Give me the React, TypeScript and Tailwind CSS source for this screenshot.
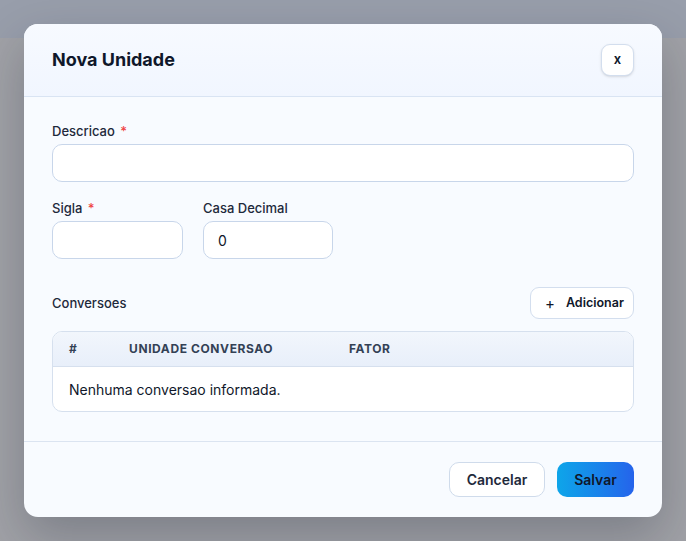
import React, { useState } from 'react';

type Conversao = { id: number; unidade: string; fator: string };

const App: React.FC = () => {
    const [descricao, setDescricao] = useState('');
    const [sigla, setSigla] = useState('');
    const [casaDecimal, setCasaDecimal] = useState('0');
    const [conversoes] = useState<Conversao[]>([]);

    return (
        <div className="relative h-[541px] w-[686px] overflow-hidden bg-[#a1a2a7] font-['Inter','Noto_Sans',sans-serif]">
            {/* page behind the overlay */}
            <div className="h-[38px] bg-[#989eab]" />

            {/* Modal */}
            <div className="absolute inset-0 flex items-center justify-center">
                <div className="w-[638px] overflow-hidden rounded-[14px] bg-[#f8fbff] shadow-[0_20px_50px_rgba(15,23,42,0.25)]">
                    {/* Header */}
                    <div className="flex h-[73px] items-center justify-between border-b border-[#d9e4f3] bg-gradient-to-b from-[#f7faff] to-[#f1f6ff] pl-7 pr-7">
                        <h2 className="-mt-0.5 text-[18px] font-bold text-[#0f172a]">Nova Unidade</h2>
                        <button className="flex h-[32px] w-[33px] items-center justify-center rounded-[9px] border border-[#d3deee] bg-white text-[13px] font-semibold text-[#0f172a] shadow-sm">
                            x
                        </button>
                    </div>

                    {/* Body */}
                    <div className="px-7 pt-6 pb-[29px]">
                        <div>
                            <label className="mb-[3px] block text-[13px] font-medium leading-5 text-[#1e293b]">
                                Descricao <span className="ml-0.5 text-[#ef4444]">*</span>
                            </label>
                            <input
                                className="block h-[38px] w-full rounded-[10px] border border-[#c8d6ea] bg-white px-[15px] text-[14px] text-[#0f172a] outline-none"
                                value={descricao}
                                onChange={e => setDescricao(e.target.value)}
                            />
                        </div>

                        <div className="mt-4 flex gap-5">
                            <div className="w-[131px]">
                                <label className="mb-[3px] block text-[13px] font-medium leading-5 text-[#1e293b]">
                                    Sigla <span className="ml-0.5 text-[#ef4444]">*</span>
                                </label>
                                <input
                                    className="block h-[38px] w-full rounded-[10px] border border-[#c8d6ea] bg-white px-[15px] text-[14px] text-[#0f172a] outline-none"
                                    value={sigla}
                                    onChange={e => setSigla(e.target.value)}
                                />
                            </div>
                            <div className="w-[130px]">
                                <label className="mb-[3px] block text-[13px] font-medium leading-5 text-[#1e293b]">
                                    Casa Decimal
                                </label>
                                <input
                                    className="block h-[38px] w-full rounded-[10px] border border-[#c8d6ea] bg-white px-[14px] text-[14px] text-[#0f172a] outline-none"
                                    value={casaDecimal}
                                    onChange={e => setCasaDecimal(e.target.value)}
                                />
                            </div>
                        </div>

                        {/* Conversoes */}
                        <div className="mt-7 flex h-[32px] items-center justify-between">
                            <span className="mt-0.5 text-[13px] font-medium text-[#1e293b]">Conversoes</span>
                            <button className="flex h-[32px] w-[104px] items-center rounded-[9px] border border-[#d3deee] bg-white pl-[14px] text-[12.5px] font-semibold text-[#0f172a]">
                                <span className="mr-[11px] text-[15px] font-normal leading-none">+</span>
                                Adicionar
                            </button>
                        </div>

                        <div className="mt-3 overflow-hidden rounded-[10px] border border-[#d6e0ee] bg-white">
                            <div className="flex h-[35px] items-center border-b border-[#d6e0ee] bg-gradient-to-b from-[#f2f6fc] to-[#e8effa] px-4 text-[12px] font-bold uppercase tracking-wider text-[#334155]">
                                <span className="w-[60px]">#</span>
                                <span className="w-[220px]">Unidade Conversao</span>
                                <span>Fator</span>
                            </div>
                            {conversoes.length === 0 ? (
                                <div className="flex h-[44px] items-center px-4 text-[14px] text-[#0f172a]">
                                    Nenhuma conversao informada.
                                </div>
                            ) : null}
                        </div>
                    </div>

                    {/* Footer */}
                    <div className="flex justify-end gap-3 border-t border-[#dbe4f1] px-7 py-5">
                        <button className="h-[35px] w-[96px] rounded-[10px] border border-[#cfdbeb] bg-white text-[14px] font-semibold text-[#1e293b]">
                            Cancelar
                        </button>
                        <button className="h-[35px] w-[77px] rounded-[10px] bg-gradient-to-r from-[#0ea5e9] to-[#2563eb] text-[14px] font-semibold text-[#0f172a]">
                            Salvar
                        </button>
                    </div>
                </div>
            </div>
        </div>
    );
};

export default App;
